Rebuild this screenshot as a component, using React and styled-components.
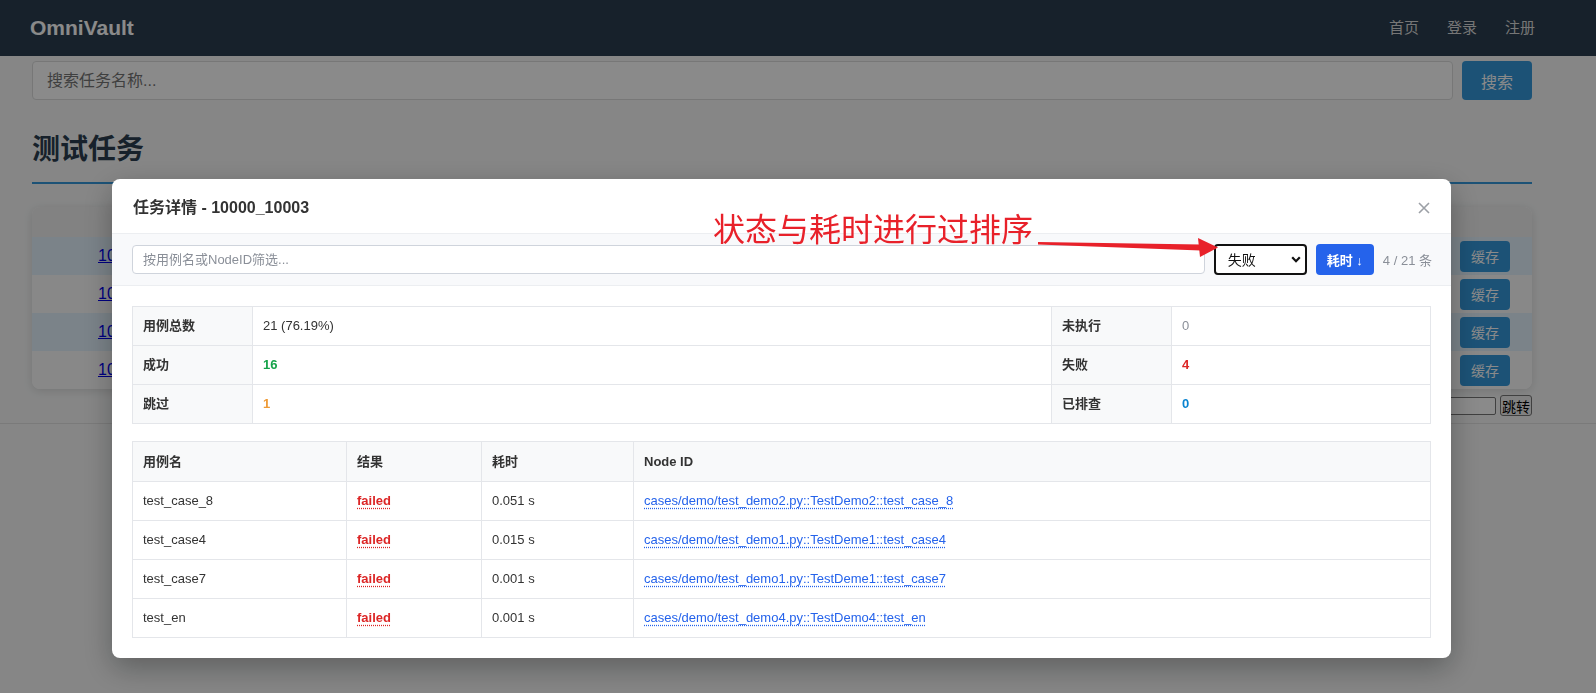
import React from 'react';
import styled, { createGlobalStyle } from 'styled-components';

const GlobalStyle = createGlobalStyle`
  html, body {
    margin: 0;
    padding: 0;
  }
  body {
    background: #f7f8f8;
    font-family: "Liberation Sans", "Noto Sans CJK SC", sans-serif;
    color: #333;
  }
  * {
    box-sizing: border-box;
  }
`

// page behind the dialog
const Page = styled.div`
  min-height: 100vh;
  display: flex;
  flex-direction: column;
`
const Header = styled.header`
  height: 56px;
  background: #2c3e50;
  display: flex;
  align-items: center;
  justify-content: space-between;
  padding: 0 61px 0 30px;
`
const Logo = styled.div`
  color: #fff;
  font-size: 21px;
  font-weight: 700;
`
const Nav = styled.nav`
  display: flex;
  gap: 28px;
`
const NavLink = styled.a`
  color: #dadada;
  font-size: 15px;
  line-height: 20px;
  text-decoration: none;
`
const Main = styled.main`
  padding: 5px 64px 0 32px;
`
const SearchRow = styled.div`
  display: flex;
  gap: 9px;
`
const SearchInput = styled.input`
  flex: 1;
  height: 39px;
  border: 1px solid #dcdcdc;
  border-radius: 4px;
  padding: 0 14px;
  font-size: 16px;
  font-family: inherit;
  background: #fff;
  &::placeholder {
    color: #757575;
  }
`
const BlueButton = styled.button`
  background: #3498db;
  color: #fff;
  border: none;
  border-radius: 4px;
  font-family: inherit;
  font-size: ${p => p.$size || 14}px;
  height: ${p => p.$h || 31}px;
  padding: 0 ${p => p.$pad || 11}px;
`
const SectionTitle = styled.h2`
  margin: 33px 0 0;
  font-size: 28px;
  line-height: 34px;
  font-weight: 700;
  color: #2c3e50;
  padding-bottom: 15px;
  border-bottom: 2px solid #3498db;
`
const Card = styled.div`
  margin-top: 23px;
  background: #fff;
  border-radius: 8px;
  overflow: hidden;
  box-shadow: 0 2px 10px rgba(0, 0, 0, 0.12);
`
const TaskTable = styled.table`
  width: 100%;
  border-collapse: collapse;
  th {
    height: 30px;
    background: #f1f1f1;
    font-size: 14px;
    font-weight: 600;
    text-align: left;
    padding: 0 12px;
    color: #555;
  }
  td {
    height: 38px;
    padding: 0 12px;
    font-size: 14px;
  }
`
const TaskRow = styled.tr`
  background: ${p => (p.$tint ? '#e3f2fd' : '#fcfcfc')};
`
const TaskLink = styled.a`
  color: #0000ee;
  font-size: 16px;
  text-decoration: underline;
  padding-left: 54px;
`
const Pager = styled.div`
  display: flex;
  justify-content: flex-end;
  align-items: center;
  gap: 4px;
  margin-top: 6px;
`
const PageInput = styled.input`
  width: 120px;
  height: 18px;
  border: 1px solid #767676;
  border-radius: 2px;
`
const PageButton = styled.button`
  height: 21px;
  padding: 0 1px;
  font-size: 14px;
  font-family: "Noto Sans CJK SC", sans-serif;
  border: 1px solid #767676;
  border-radius: 3px;
  background: #efefef;
  color: #000;
`
const Footer = styled.footer`
  flex: 1;
  margin-top: 7px;
  border-top: 1px solid #e2e2e2;
`

// dialog
const Overlay = styled.div`
  position: fixed;
  inset: 0;
  background: rgba(0, 0, 0, 0.46);
`
const Modal = styled.div`
  position: absolute;
  left: 112px;
  top: 179px;
  width: 1339px;
  background: #fff;
  border-radius: 8px;
  box-shadow: 0 10px 30px rgba(0, 0, 0, 0.3);
  overflow: hidden;
`
const ModalHeader = styled.div`
  height: 55px;
  display: flex;
  align-items: center;
  justify-content: space-between;
  padding: 0 20px 0 21px;
  border-bottom: 1px solid #eceef1;
`
const ModalTitle = styled.h3`
  margin: 0;
  font-size: 16px;
  font-weight: 700;
  color: #333;
`
const CloseButton = styled.button`
  border: none;
  background: none;
  padding: 0;
  width: 14px;
  height: 14px;
  display: flex;
  align-items: center;
  justify-content: center;
  margin-top: 4px;
`
const FilterBar = styled.div`
  height: 52px;
  background: #f8f9fb;
  border-bottom: 1px solid #eceef1;
  display: flex;
  align-items: center;
  gap: 9px;
  padding: 0 19px 0 20px;
`
const FilterInput = styled.input`
  flex: 1;
  height: 29px;
  border: 1px solid #cfd4dc;
  border-radius: 4px;
  padding: 0 10px;
  font-size: 13px;
  font-family: inherit;
  background: #fff;
  &::placeholder {
    color: #8a8f98;
  }
`
const SelectWrap = styled.div`
  position: relative;
  width: 93px;
  height: 31px;
`
const StatusSelect = styled.select`
  appearance: none;
  width: 100%;
  height: 100%;
  border: 2px solid #111;
  border-radius: 4px;
  padding: 0 22px 0 12px;
  font-size: 14px;
  font-family: inherit;
  color: #111;
  background: #fff;
`
const Chevron = styled.svg`
  position: absolute;
  right: 6px;
  top: 12px;
  pointer-events: none;
`
const SortButton = styled.button`
  height: 31px;
  padding: 0 11px;
  border: none;
  border-radius: 4px;
  background: #2563eb;
  color: #fff;
  font-family: inherit;
  font-size: 13px;
  font-weight: 700;
`
const Count = styled.span`
  font-size: 13px;
  color: #8a8f98;
  white-space: nowrap;
`
const ModalBody = styled.div`
  padding: 20px;
`
const Grid = styled.table`
  width: 100%;
  border-collapse: collapse;
  table-layout: fixed;
  font-size: 13px;
  line-height: 18px;
  margin-top: ${p => p.$gap || 0}px;
  th, td {
    border: 1px solid #e4e6ea;
    padding: 0 10px;
    text-align: left;
    vertical-align: middle;
    height: 39px;
  }
  th {
    background: #f8f9fa;
    font-weight: 600;
    color: #333;
  }
  td {
    color: #333;
  }
`
const HeadRow = styled.tr`
  th {
    height: 40px;
  }
`
const Value = styled.td`
  && {
    color: ${p => p.$color || '#333'};
    font-weight: ${p => p.$weight || 400};
  }
`
const Failed = styled.abbr`
  color: #dc2626;
  font-weight: 600;
  text-decoration: underline dotted;
  text-underline-offset: 3px;
`
const NodeLink = styled.a`
  color: #2563eb;
  text-decoration: underline dotted;
  text-underline-offset: 3px;
`

// red screenshot annotation
const Note = styled.div`
  position: absolute;
  left: 713px;
  top: 211px;
  font-family: "Noto Sans CJK SC", sans-serif;
  font-size: 32px;
  line-height: 1;
  color: #e8212a;
  white-space: nowrap;
`
const Arrow = styled.svg`
  position: absolute;
  left: 1030px;
  top: 225px;
`

const tasks = ['10000_10003', '10000_10002', '10000_10001', '10000_10000']

const cases = [
  ['test_case_8', '0.051 s', 'cases/demo/test_demo2.py::TestDemo2::test_case_8'],
  ['test_case4', '0.015 s', 'cases/demo/test_demo1.py::TestDeme1::test_case4'],
  ['test_case7', '0.001 s', 'cases/demo/test_demo1.py::TestDeme1::test_case7'],
  ['test_en', '0.001 s', 'cases/demo/test_demo4.py::TestDemo4::test_en'],
]

export default function App() {
  return (
    <>
      <GlobalStyle />
      <Page>
        <Header>
          <Logo>OmniVault</Logo>
          <Nav>
            <NavLink href="#">首页</NavLink>
            <NavLink href="#">登录</NavLink>
            <NavLink href="#">注册</NavLink>
          </Nav>
        </Header>
        <Main>
          <SearchRow>
            <SearchInput placeholder="搜索任务名称..." />
            <BlueButton $size={16} $h={39} $pad={19}>搜索</BlueButton>
          </SearchRow>
          <SectionTitle>测试任务</SectionTitle>
          <Card>
            <TaskTable>
              <colgroup>
                <col style={{ width: 300 }} />
                <col />
                <col style={{ width: 200 }} />
                <col style={{ width: 240 }} />
              </colgroup>
              <thead>
                <tr>
                  <th></th>
                  <th>任务名称</th>
                  <th>创建时间</th>
                  <th>操作</th>
                </tr>
              </thead>
              <tbody>
                {tasks.map((t, i) => (
                  <TaskRow key={t} $tint={i % 2 === 0}>
                    <td><TaskLink href="#">{t}</TaskLink></td>
                    <td>demo</td>
                    <td>2024-01-01</td>
                    <td style={{ textAlign: 'right', paddingRight: 22 }}>
                      <BlueButton>缓存</BlueButton>
                    </td>
                  </TaskRow>
                ))}
              </tbody>
            </TaskTable>
          </Card>
          <Pager>
            <PageInput />
            <PageButton>跳转</PageButton>
          </Pager>
        </Main>
        <Footer />
      </Page>

      <Overlay>
        <Modal>
          <ModalHeader>
            <ModalTitle>任务详情 - 10000_10003</ModalTitle>
            <CloseButton aria-label="关闭">
              <svg width="12" height="12" viewBox="0 0 12 12">
                <path d="M1 1 L11 11 M11 1 L1 11" stroke="#9ca0a6" strokeWidth="1.6" fill="none" />
              </svg>
            </CloseButton>
          </ModalHeader>
          <FilterBar>
            <FilterInput placeholder="按用例名或NodeID筛选..." />
            <SelectWrap>
              <StatusSelect defaultValue="failed">
                <option value="all">全部</option>
                <option value="passed">成功</option>
                <option value="failed">失败</option>
                <option value="skipped">跳过</option>
              </StatusSelect>
              <Chevron width="10" height="7" viewBox="0 0 10 7">
                <path d="M1.2 1.2 L5 5.2 L8.8 1.2" stroke="#111" strokeWidth="2.2" fill="none" />
              </Chevron>
            </SelectWrap>
            <SortButton>耗时 ↓</SortButton>
            <Count>4 / 21 条</Count>
          </FilterBar>
          <ModalBody>
            <Grid>
              <colgroup>
                <col style={{ width: 120 }} />
                <col />
                <col style={{ width: 120 }} />
                <col style={{ width: 259 }} />
              </colgroup>
              <tbody>
                <tr>
                  <th>用例总数</th>
                  <Value>21 (76.19%)</Value>
                  <th>未执行</th>
                  <Value $color="#8a8f98">0</Value>
                </tr>
                <tr>
                  <th>成功</th>
                  <Value $color="#16a34a" $weight={700}>16</Value>
                  <th>失败</th>
                  <Value $color="#dc2626" $weight={700}>4</Value>
                </tr>
                <tr>
                  <th>跳过</th>
                  <Value $color="#ee9a36" $weight={600}>1</Value>
                  <th>已排查</th>
                  <Value $color="#0a84d0" $weight={700}>0</Value>
                </tr>
              </tbody>
            </Grid>
            <Grid $gap={17}>
              <colgroup>
                <col style={{ width: 214 }} />
                <col style={{ width: 135 }} />
                <col style={{ width: 152 }} />
                <col />
              </colgroup>
              <thead>
                <HeadRow>
                  <th>用例名</th>
                  <th>结果</th>
                  <th>耗时</th>
                  <th>Node ID</th>
                </HeadRow>
              </thead>
              <tbody>
                {cases.map(([name, time, node]) => (
                  <tr key={name}>
                    <td>{name}</td>
                    <td><Failed title="failed">failed</Failed></td>
                    <td>{time}</td>
                    <td><NodeLink href="#">{node}</NodeLink></td>
                  </tr>
                ))}
              </tbody>
            </Grid>
          </ModalBody>
        </Modal>

        <Note>状态与耗时进行过排序</Note>
        <Arrow width="200" height="40" viewBox="0 0 200 40">
          <polygon points="8,17 171,19.5 171,25.5 8,19.6" fill="#e8212a" />
          <polygon points="168,13 188,22.5 170,32" fill="#e8212a" />
        </Arrow>
      </Overlay>
    </>
  );
}
